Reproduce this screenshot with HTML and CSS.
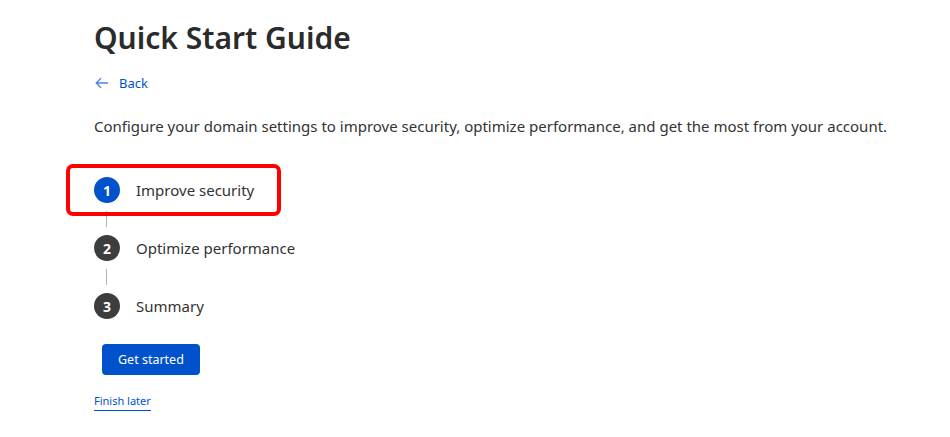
FILE: index.html
```html
<!DOCTYPE html>
<html lang="en">
<head>
    <meta charset="UTF-8">
    <meta name="viewport" content="width=device-width, initial-scale=1.0">
    <title>Quick Start Guide</title>
    <link rel="stylesheet" href="styles.css">
</head>
<body>
    <div class="container">
        <h1 class="title">Quick Start Guide</h1>

        <a class="back-link" href="#">
            <svg class="back-icon" width="14" height="12" viewBox="0 0 14 12" fill="none">
                <path d="M13 6H1.5M6 1.2L1.2 6L6 10.8" stroke="#4a86e0" stroke-width="1.3"/>
            </svg>
            Back
        </a>

        <p class="intro">Configure your domain settings to improve security, optimize performance, and get the most from your account.</p>

        <div class="steps">
            <div class="step current">
                <span class="step-number">1</span>
                <span class="step-label">Improve security</span>
            </div>
            <div class="connector"></div>
            <div class="step">
                <span class="step-number">2</span>
                <span class="step-label">Optimize performance</span>
            </div>
            <div class="connector"></div>
            <div class="step">
                <span class="step-number">3</span>
                <span class="step-label">Summary</span>
            </div>
        </div>

        <button class="start-button">Get started</button>

        <a class="finish-link" href="#">Finish later</a>
    </div>
</body>
</html>
```

FILE: styles.css
```css
body {
    font-family: 'Noto Sans', sans-serif;
    background-color: #ffffff;
    color: #333333;
    margin: 0;
}

.container {
    display: flex;
    flex-direction: column;
    align-items: flex-start;
    padding: 18px 0 0 94px;
}

.title {
    font-size: 30px;
    font-weight: 600;
    color: #2b2b2b;
    margin: 0;
    line-height: 40px;
}

.back-link {
    display: flex;
    align-items: center;
    gap: 10px;
    margin-top: 15px;
    font-size: 13px;
    color: #0052cc;
    text-decoration: none;
    line-height: 20px;
}

.back-icon {
    margin-left: 1px;
}

.intro {
    font-size: 15px;
    line-height: 22px;
    margin: 22px 0 0;
    color: #333333;
}

.steps {
    display: flex;
    flex-direction: column;
    margin-top: 40px;
}

.step {
    display: flex;
    align-items: center;
    gap: 16px;
    height: 26px;
    position: relative;
}

.step.current::before {
    content: '';
    position: absolute;
    left: -28px;
    top: -13px;
    width: 207px;
    height: 44px;
    border: 4px solid #ff0000;
    border-radius: 7px;
}

.step-number {
    width: 26px;
    height: 26px;
    border-radius: 50%;
    background-color: #3d3d3d;
    color: #ffffff;
    font-size: 14px;
    font-weight: 700;
    display: flex;
    align-items: center;
    justify-content: center;
}

.current .step-number {
    background-color: #0052cc;
}

.step-label {
    font-size: 15px;
    color: #333333;
}

.connector {
    width: 1px;
    height: 16px;
    background-color: #b3b3b3;
    margin: 8px 0 8px 12px;
}

.start-button {
    margin: 25px 0 0 8px;
    background-color: #0052cc;
    color: #ffffff;
    font-family: 'Noto Sans', sans-serif;
    font-size: 12.5px;
    border: none;
    border-radius: 4px;
    padding: 0 16px;
    height: 31px;
    cursor: pointer;
}

.finish-link {
    margin-top: 19px;
    font-size: 11px;
    line-height: 14px;
    color: #0052cc;
    text-decoration: none;
    border-bottom: 1px solid #0052cc;
    padding-bottom: 2px;
}
```
